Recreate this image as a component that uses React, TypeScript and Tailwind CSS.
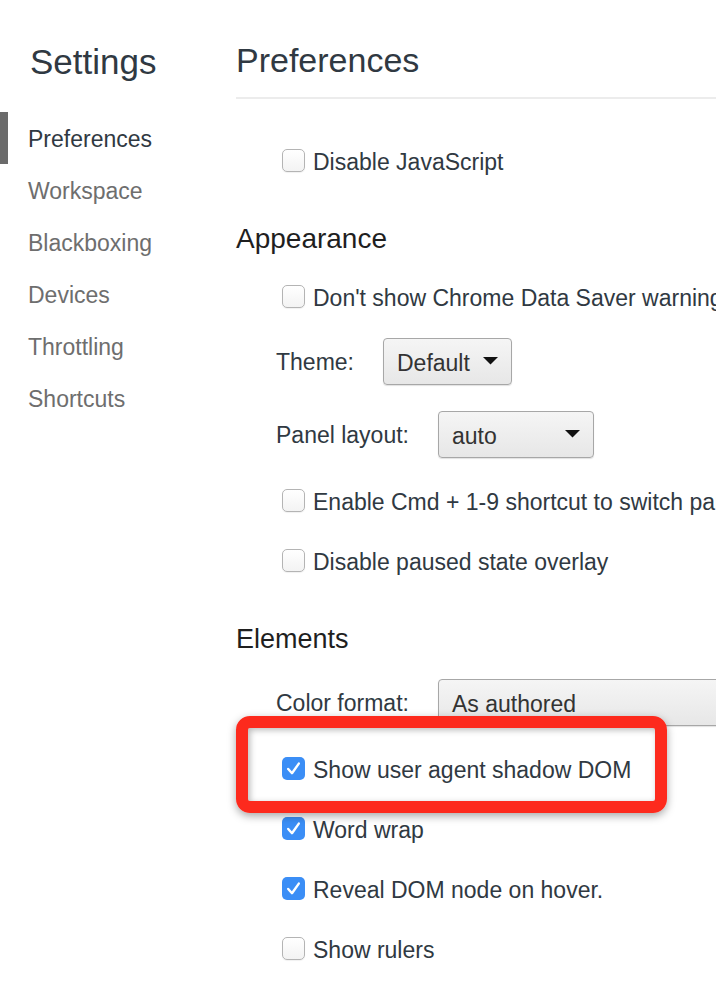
import React from "react";

function Checkbox({ checked }: { checked?: boolean }) {
  if (checked) {
    return (
      <span className="-mt-[4px] flex h-[23px] w-[23px] shrink-0 items-center justify-center rounded-[5px] bg-[#3b8ef6]">
        <svg width="23" height="23" viewBox="0 0 23 23">
          <path d="M6.2 12 L10 16.2 L16.8 6.6" fill="none" stroke="#ffffff" strokeWidth="2.4" strokeLinecap="round" strokeLinejoin="round" />
        </svg>
      </span>
    );
  }
  return (
    <span className="-mt-[4px] block h-[23px] w-[23px] shrink-0 rounded-[5px] border border-[#b4b4b4] bg-gradient-to-b from-white to-[#f3f3f3] shadow-[0_1px_1px_rgba(0,0,0,0.06)]" />
  );
}

function CheckRow({ label, checked, className = "", children }: { label: string; checked?: boolean; className?: string; children?: React.ReactNode }) {
  return (
    <div className={"relative flex h-[24px] items-center gap-[8px] whitespace-nowrap pl-[46px] text-[23px] leading-[24px] " + className}>
      <Checkbox checked={checked} />
      <span>{label}</span>
      {children}
    </div>
  );
}

function Arrow() {
  return (
    <svg width="15" height="8" viewBox="0 0 15 8" className="shrink-0">
      <path d="M0 0 H15 L7.5 7.5 Z" fill="#111111" />
    </svg>
  );
}

function SelectRow({ label, value, width, className = "", arrow = true }: { label: string; value: string; width: string; className?: string; arrow?: boolean }) {
  return (
    <div className={"flex items-center gap-[29px] whitespace-nowrap pl-[40px] text-[23px] " + className}>
      <span className="leading-[24px]">{label}</span>
      <div className={"flex h-[47px] shrink-0 items-center justify-between rounded-[4px] border border-[#a7a7a7] bg-gradient-to-b from-[#f5f5f5] to-[#e7e7e7] pl-[13px] pr-[13px] pt-[3px] text-[#333333] shadow-[0_1px_1px_rgba(0,0,0,0.12)] " + width}>
        <span className="leading-[24px]">{value}</span>
        {arrow ? (
          <span className="-mt-[4px] flex">
            <Arrow />
          </span>
        ) : null}
      </div>
    </div>
  );
}

const navItems = ["Preferences", "Workspace", "Blackboxing", "Devices", "Throttling", "Shortcuts"];

export default function App() {
  return (
    <div className="flex h-[986px] w-[716px] overflow-hidden bg-white font-['Liberation_Sans',Arial,sans-serif] text-[#303942]">
      <aside className="w-[236px] shrink-0">
        <h1 className="ml-[30px] mt-[42px] text-[35px] leading-[40px] font-normal">Settings</h1>
        <nav className="mt-[30px] flex flex-col">
          {navItems.map((item, i) =>
            i === 0 ? (
              <div key={item} className="h-[52px] border-l-[8px] border-[#6b6b6b] pl-[20px] pt-[1px] text-[23px] leading-[52px] text-[#303942]">
                {item}
              </div>
            ) : (
              <div key={item} className="h-[52px] pl-[28px] pt-[1px] text-[23px] leading-[52px] text-[#6e6e6e]">
                {item}
              </div>
            )
          )}
        </nav>
      </aside>

      <main className="min-w-0 flex-1">
        <div className="mt-[40px] border-b-2 border-[#ececec] pb-[17px]">
          <h2 className="text-[34px] leading-[40px] font-normal">Preferences</h2>
        </div>

        <CheckRow label="Disable JavaScript" className="mt-[51px]" />

        <h3 className="mt-[49px] text-[28px] leading-[32px] text-[#1f1f1f] font-normal">Appearance</h3>
        <CheckRow label="Don't show Chrome Data Saver warning" className="mt-[31px]" />
        <SelectRow label="Theme:" value="Default" width="w-[129px]" className="mt-[28px]" />
        <SelectRow label="Panel layout:" value="auto" width="w-[156px]" className="mt-[26px]" />
        <CheckRow label="Enable Cmd + 1-9 shortcut to switch panels" className="mt-[32px]" />
        <CheckRow label="Disable paused state overlay" className="mt-[36px]" />

        <h3 className="mt-[49px] text-[27px] leading-[32px] text-[#1f1f1f] font-normal">Elements</h3>
        <SelectRow label="Color format:" value="As authored" width="w-[320px]" className="mt-[24px]" arrow={false} />
        <CheckRow label="Show user agent shadow DOM" checked className="mt-[32px]">
          <div className="pointer-events-none absolute left-0 top-[-42px] z-10 h-[97px] w-[431px] rounded-[14px] border-[12px] border-[#fd2a1d] shadow-[0_3px_8px_rgba(0,0,0,0.35),inset_2px_2px_6px_rgba(0,0,0,0.28)]" />
        </CheckRow>
        <CheckRow label="Word wrap" checked className="mt-[36px]" />
        <CheckRow label="Reveal DOM node on hover." checked className="mt-[36px]" />
        <CheckRow label="Show rulers" className="mt-[36px]" />
      </main>
    </div>
  );
}
